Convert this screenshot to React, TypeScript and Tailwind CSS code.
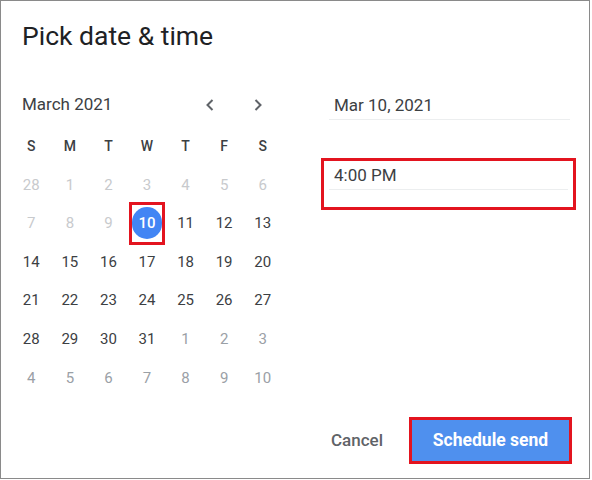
import React from 'react';

type Day = { n: number; tone: 'past' | 'cur' | 'next'; selected?: boolean };

const weeks: Day[][] = [
  [28, 1, 2, 3, 4, 5, 6].map((n) => ({ n, tone: 'past' as const })),
  [
    { n: 7, tone: 'past' },
    { n: 8, tone: 'past' },
    { n: 9, tone: 'past' },
    { n: 10, tone: 'cur', selected: true },
    { n: 11, tone: 'cur' },
    { n: 12, tone: 'cur' },
    { n: 13, tone: 'cur' },
  ],
  [14, 15, 16, 17, 18, 19, 20].map((n) => ({ n, tone: 'cur' as const })),
  [21, 22, 23, 24, 25, 26, 27].map((n) => ({ n, tone: 'cur' as const })),
  [
    { n: 28, tone: 'cur' },
    { n: 29, tone: 'cur' },
    { n: 30, tone: 'cur' },
    { n: 31, tone: 'cur' },
    { n: 1, tone: 'next' },
    { n: 2, tone: 'next' },
    { n: 3, tone: 'next' },
  ],
  [4, 5, 6, 7, 8, 9, 10].map((n) => ({ n, tone: 'next' as const })),
];

const Chevron = ({ dir }: { dir: 'left' | 'right' }) => (
  <svg width="10" height="14" viewBox="0 0 10 14" fill="none">
    <path
      d={dir === 'left' ? 'M7.5 2 L2.5 7 L7.5 12' : 'M2.5 2 L7.5 7 L2.5 12'}
      stroke="#5f6368"
      strokeWidth="2"
    />
  </svg>
);

const DayCell = ({ day }: { day: Day }) => {
  if (day.selected) {
    return (
      <div className="flex items-center justify-center">
        <div className="w-[36px] h-[43px] border-[3px] border-[#e3141f] flex items-center justify-center">
          <div className="w-[32px] h-[32px] rounded-full bg-[#4285f4] text-white flex items-center justify-center text-[15px] font-medium">
            {day.n}
          </div>
        </div>
      </div>
    );
  }
  const color =
    day.tone === 'past' ? 'text-[#c8cacd]' : day.tone === 'next' ? 'text-[#9aa0a6]' : 'text-[#3c4043]';
  return <div className={`flex items-center justify-center text-[15px] ${color}`}>{day.n}</div>;
};

export default function App() {
  return (
    <div
      className="w-[590px] h-[479px] border border-[#8a8a8a] bg-white flex flex-col"
      style={{ fontFamily: 'Roboto, "Liberation Sans", sans-serif' }}
    >
      <h1 className="pl-[21px] pt-[19px] h-[84px] text-[26.5px] leading-[32px] text-[#202124]">Pick date &amp; time</h1>

      <div className="flex">
        {/* calendar */}
        <div className="pl-[11px] w-[316px]">
          <div className="flex items-center h-[20px] mt-[10px]">
            <span className="ml-[10px] text-[17px] text-[#3c4043] w-[182px]">March 2021</span>
            <span className="ml-[1px]">
              <Chevron dir="left" />
            </span>
            <span className="ml-[38px]">
              <Chevron dir="right" />
            </span>
          </div>
          <div className="grid grid-cols-7 w-[270px] auto-rows-[38.6px] mt-[12px]">
            {['S', 'M', 'T', 'W', 'T', 'F', 'S'].map((d, i) => (
              <div key={i} className="flex items-center justify-center text-[14px] font-medium text-[#3c4043]">
                {d}
              </div>
            ))}
            {weeks.flat().map((day, i) => (
              <DayCell key={i} day={day} />
            ))}
          </div>
        </div>

        {/* date + time fields */}
        <div className="flex flex-col pt-[10px]">
          <div className="ml-[12px] w-[241px] pl-[5px] pb-[4px] border-b border-[#eceeef] text-[17px] leading-[20px] text-[#3c4043]">
            Mar 10, 2021
          </div>
          <div className="mt-[38px] ml-[4px] w-[255px] h-[52px] border-[3px] border-[#e3141f] px-[5px] pt-[4px]">
            <div className="pl-[5px] pb-[4px] border-b border-[#eceeef] text-[17px] leading-[20px] text-[#3c4043]">
              4:00 PM
            </div>
          </div>
        </div>
      </div>

      <div className="mt-auto mb-[14px] flex items-center justify-end pr-[17px]">
        <button className="text-[17px] font-medium text-[#5f6368] mr-[26px]">Cancel</button>
        <div className="w-[163px] h-[47px] border-[3px] border-[#e3141f] flex">
          <button className="flex-1 bg-[#4f90ee] text-white text-[17.5px] font-bold">Schedule send</button>
        </div>
      </div>
    </div>
  );
}
